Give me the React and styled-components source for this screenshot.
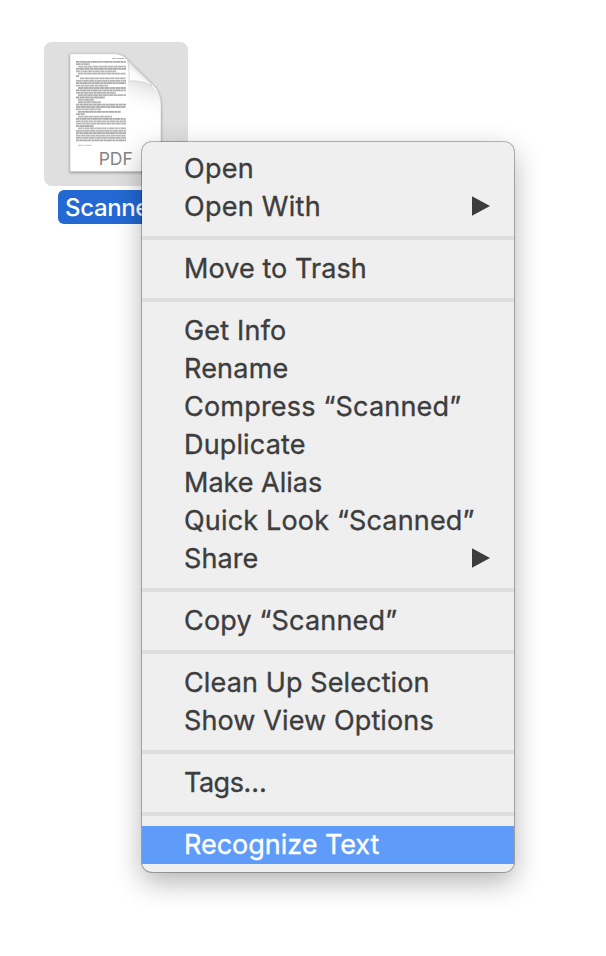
import React from "react";
import styled, { createGlobalStyle } from "styled-components";

const GlobalStyle = createGlobalStyle`
  * { box-sizing: border-box; }
  body { margin: 0; background: #fff; font-family: Inter, "Liberation Sans", sans-serif; }
`;

const Desktop = styled.main`
  position: relative;
  width: 606px;
  height: 956px;
  overflow: hidden;
  background: #fff;
`;

const FileItem = styled.div`
  position: absolute;
  left: 44px;
  top: 42px;
  width: 144px;
  display: flex;
  flex-direction: column;
  align-items: center;
  gap: 4px;
`;

const Thumbnail = styled.div`
  width: 144px;
  height: 144px;
  border-radius: 8px;
  background: #dfdfdf;
  overflow: hidden;
  svg { display: block; }
`;

const FileName = styled.div`
  height: 34px;
  width: 116px;
  padding-left: 7px;
  border-radius: 6px;
  background: #2469d3;
  color: #fff;
  font-size: 24px;
  font-weight: 500;
  line-height: 35px;
  letter-spacing: -0.35px;
  overflow: hidden;
`;

const Menu = styled.nav`
  position: absolute;
  left: 142px;
  top: 142px;
  width: 372px;
  padding: 8px 0;
  border-radius: 10px;
  background: #efefef;
  box-shadow: 0 0 0 1px rgba(0, 0, 0, 0.27), 0 10px 28px rgba(0, 0, 0, 0.3);
`;

const Entry = styled.div`
  display: flex;
  align-items: center;
  justify-content: space-between;
  height: 38px;
  padding: 0 24px 0 42px;
  background: ${(p) => (p.$active ? "#5f9bf8" : "transparent")};
  color: ${(p) => (p.$active ? "#fff" : "#3d3d3d")};
  font-size: 27px;
  -webkit-text-stroke: 0.35px currentColor;
  line-height: 38px;
  letter-spacing: ${(p) => p.$tracking}px;
  white-space: nowrap;
`;

const Separator = styled.div`
  height: 4px;
  margin: 10px 0;
  background: #dedede;
`;

const ArrowIcon = styled.svg`
  display: block;
  margin-bottom: 2px;
`;

const Arrow = () => (
  <ArrowIcon width="18" height="20" viewBox="0 0 18 20">
    <path d="M0 .3 18 10 0 19.7Z" fill="#3d3d3d" />
  </ArrowIcon>
);

const groups = [
  [["Open", 0.25], ["Open With", 0.28, true]],
  [["Move to Trash", 0.08]],
  [
    ["Get Info", 0.2],
    ["Rename", 0.2],
    ["Compress “Scanned”", 0.2],
    ["Duplicate", 0.15],
    ["Make Alias", 0],
    ["Quick Look “Scanned”", 0.17],
    ["Share", 0.1, true],
  ],
  [["Copy “Scanned”", 0.17]],
  [["Clean Up Selection", 0.12], ["Show View Options", 0.12]],
  [["Tags…", -0.5]],
  [["Recognize Text", -0.03]],
];

// Printed lines of the scanned page: [indent, right edge] for each line
const lines = [
  [0, 50], [0, 14], [2, 50], [0, 50], [0, 40], [2, 50], [0, 3], [4, 50], [0, 50],
  [0, 50], [0, 32], [2, 50], [0, 50], [0, 40], [2, 50], [0, 29], [2, 18], [2, 25],
  [0, 50], [0, 50], [0, 25], [2, 45], [0, 9], [2, 36], [0, 50], [0, 50], [0, 50],
  [0, 18], [2, 50], [0, 50], [0, 50], [0, 50], [0, 50], [0, 50],
];

const PdfIcon = () => (
  <svg width="144" height="144" viewBox="44 42 144 144">
    <defs>
      <linearGradient id="curl" x1="130" y1="82" x2="141" y2="69" gradientUnits="userSpaceOnUse">
        <stop offset="0" stopColor="#fff" />
        <stop offset=".55" stopColor="#fbfbfb" />
        <stop offset="1" stopColor="#d9d9d9" />
      </linearGradient>
      <linearGradient id="fold" x1="138" y1="112" x2="148" y2="82" gradientUnits="userSpaceOnUse">
        <stop offset="0" stopColor="#fff" stopOpacity="0" />
        <stop offset="1" stopColor="#dedede" />
      </linearGradient>
      <filter id="lift" x="-10%" y="-10%" width="120%" height="120%">
        <feDropShadow dx="0" dy=".8" stdDeviation=".8" floodOpacity=".5" />
      </filter>
    </defs>
    <path
      d="M70 53.8H113C120 53.8 124 56 128 60L151 83C158 89 161 96 161 106V171.600H70Z"
      fill="#fff"
      stroke="#bbb"
      strokeWidth=".5"
      filter="url(#lift)"
    />
    <path d="M128 81C140 81 148 82 153 87C158 92 161 98 161 106V120H128Z" fill="url(#fold)" />
    <path d="M112 58.500H126" stroke="#b5b5b5" strokeWidth="1" strokeDasharray="4 1 7 1" />
    {lines.map(([from, to], i) => (
      <path
        key={i}
        d={`M${76 + from} ${61.8 + i * 2.38}H${76 + to}`}
        stroke={i % 3 ? "#b6b6b6" : "#acacac"}
        strokeWidth="1.8"
        strokeDasharray={`${3 + (i % 3)} .4 ${2 + (i % 4)} .3 5 .4`}
      />
    ))}
    <path d="M78 145.300H92" stroke="#bbb" strokeWidth=".9" strokeDasharray="5 .5 2 .5" />
    <path d="M127.600 60L151 83.500C151.500 84 152 85 151.500 86C145 81.500 136 80.500 129 81C129.500 74 129 66 127.600 60Z" fill="url(#curl)" stroke="#b5b5b5" strokeWidth=".5" />
    <text x="98.700" y="165" fontFamily="Inter, sans-serif" fontSize="17.500" letterSpacing="0" fill="#858585">PDF</text>
  </svg>
);

export default function App() {
  return (
    <>
      <GlobalStyle />
      <Desktop>
        <FileItem>
          <Thumbnail><PdfIcon /></Thumbnail>
          <FileName>Scanned</FileName>
        </FileItem>
        <Menu>
          {groups.map((group, g) => (
            <React.Fragment key={g}>
              {g > 0 && <Separator />}
              {group.map(([label, tracking, submenu]) => (
                <Entry key={label} $tracking={tracking} $active={label === "Recognize Text"}>
                  <span>{label}</span>
                  {submenu && <Arrow />}
                </Entry>
              ))}
            </React.Fragment>
          ))}
        </Menu>
      </Desktop>
    </>
  );
}
